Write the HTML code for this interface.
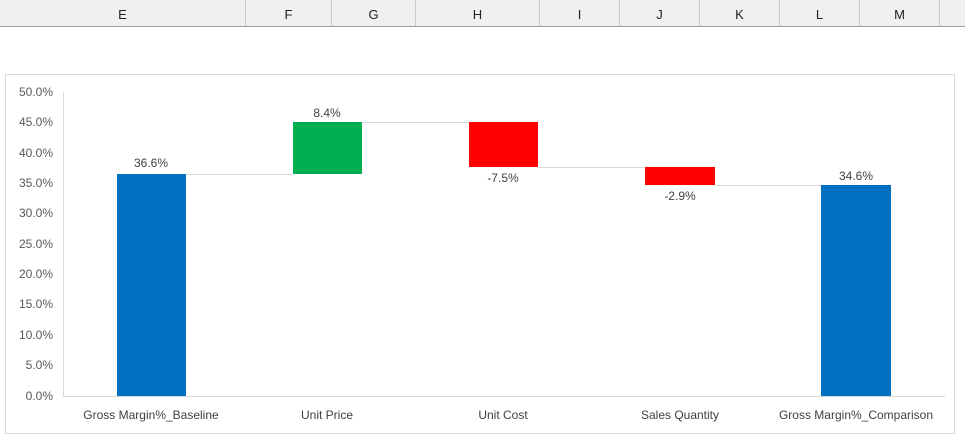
<!DOCTYPE html>
<html><head><style>
body{margin:0;width:965px;height:440px;background:#fff;position:relative;overflow:hidden;font-family:"Liberation Sans",sans-serif}
.hdr{position:absolute;left:0;top:0;width:965px;height:26px;background:#f0f0f0;border-bottom:1px solid #a0a0a0}
.c{position:absolute;top:0;height:26px;line-height:30px;text-align:center;font-size:13px;color:#222;border-right:1px solid #c8c8c8;box-sizing:border-box}
.box{position:absolute;left:5px;top:74px;width:950px;height:360px;border:1px solid #d9d9d9;box-sizing:border-box}
.yl{position:absolute;left:0;width:53px;text-align:right;font-size:12px;color:#595959}
.b{position:absolute}
.dl{position:absolute;font-size:12px;color:#404040;text-align:center;width:80px}
.xl{position:absolute;top:408px;font-size:12px;color:#404040;text-align:center;width:180px}
.ln{position:absolute;height:1px;background:#d9d9d9}
</style></head><body>
<div class="hdr">
<div class="c" style="left:0;width:246px">E</div>
<div class="c" style="left:246px;width:86px">F</div>
<div class="c" style="left:332px;width:84px">G</div>
<div class="c" style="left:416px;width:124px">H</div>
<div class="c" style="left:540px;width:80px">I</div>
<div class="c" style="left:620px;width:80px">J</div>
<div class="c" style="left:700px;width:80px">K</div>
<div class="c" style="left:780px;width:80px">L</div>
<div class="c" style="left:860px;width:80px">M</div>
</div>
<div class="box"></div>
<div style="position:absolute;left:63px;top:92px;width:1px;height:304px;background:#d9d9d9"></div>
<div style="position:absolute;left:63px;top:396px;width:882px;height:1px;background:#d9d9d9"></div>
<div class="yl" style="top:85px">50.0%</div>
<div class="yl" style="top:115px">45.0%</div>
<div class="yl" style="top:146px">40.0%</div>
<div class="yl" style="top:176px">35.0%</div>
<div class="yl" style="top:206px">30.0%</div>
<div class="yl" style="top:237px">25.0%</div>
<div class="yl" style="top:267px">20.0%</div>
<div class="yl" style="top:297px">15.0%</div>
<div class="yl" style="top:328px">10.0%</div>
<div class="yl" style="top:358px">5.0%</div>
<div class="yl" style="top:389px">0.0%</div>
<div class="ln" style="left:186px;top:174px;width:107px"></div>
<div class="ln" style="left:362px;top:122px;width:107px"></div>
<div class="ln" style="left:538px;top:167px;width:107px"></div>
<div class="ln" style="left:715px;top:185px;width:106px"></div>
<div class="b" style="left:117px;top:174px;width:69px;height:222px;background:#0070c0"></div>
<div class="b" style="left:293px;top:122px;width:69px;height:52px;background:#00b050"></div>
<div class="b" style="left:469px;top:122px;width:69px;height:45px;background:#ff0000"></div>
<div class="b" style="left:645px;top:167px;width:70px;height:18px;background:#ff0000"></div>
<div class="b" style="left:821px;top:185px;width:70px;height:211px;background:#0070c0"></div>
<div class="dl" style="left:111px;top:156px">36.6%</div>
<div class="dl" style="left:287px;top:106px">8.4%</div>
<div class="dl" style="left:463px;top:171px">-7.5%</div>
<div class="dl" style="left:640px;top:189px">-2.9%</div>
<div class="dl" style="left:816px;top:169px">34.6%</div>
<div class="xl" style="left:61px">Gross Margin%_Baseline</div>
<div class="xl" style="left:237px">Unit Price</div>
<div class="xl" style="left:413px">Unit Cost</div>
<div class="xl" style="left:590px">Sales Quantity</div>
<div class="xl" style="left:766px">Gross Margin%_Comparison</div>
</body></html>
